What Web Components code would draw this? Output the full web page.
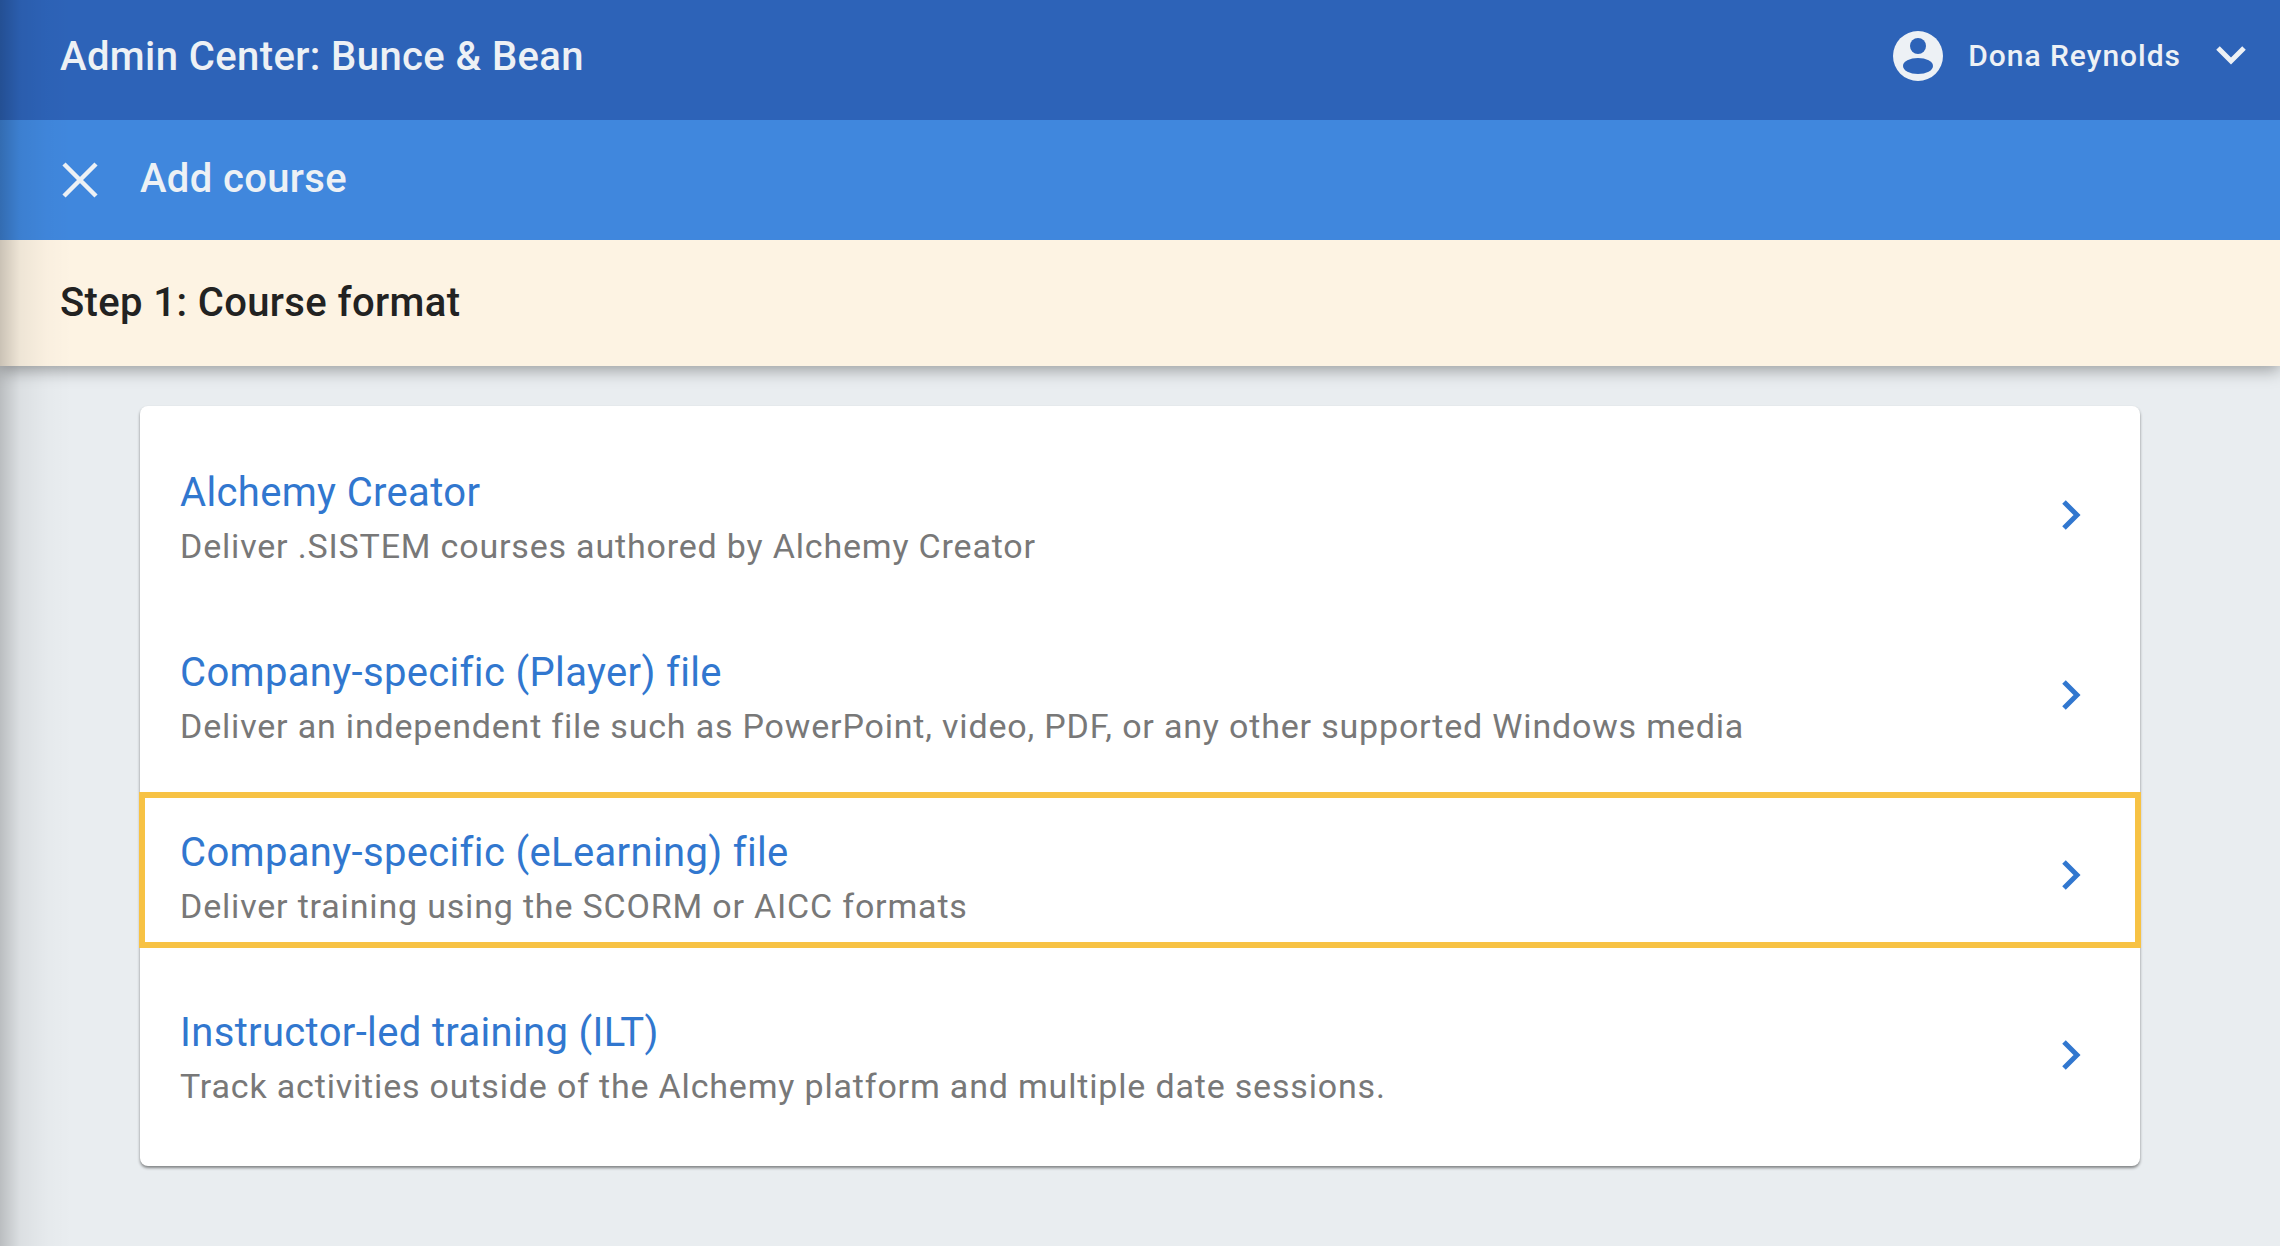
<!DOCTYPE html>
<html>
<head>
<meta charset="utf-8">
<title>Add course</title>
<style>
    html, body { margin: 0; height: 100%; }
    body { background: #e9edf0; font-family: Roboto, "Liberation Sans", sans-serif; overflow: hidden; }
</style>
</head>
<body>
<admin-page>
    <top-bar slot="top" title="Admin Center: Bunce &amp; Bean" user="Dona Reynolds"></top-bar>
    <sub-bar slot="top" title="Add course"></sub-bar>
    <step-bar slot="top">Step 1: Course format</step-bar>
    <course-list>
        <course-option heading="Alchemy Creator">Deliver .SISTEM courses authored by Alchemy Creator</course-option>
        <course-option heading="Company-specific (Player) file">Deliver an independent file such as PowerPoint, video, PDF, or any other supported Windows media</course-option>
        <course-option heading="Company-specific (eLearning) file" focused>Deliver training using the SCORM or AICC formats</course-option>
        <course-option heading="Instructor-led training (ILT)">Track activities outside of the Alchemy platform and multiple date sessions.</course-option>
    </course-list>
</admin-page>

<script>
class AdminPage extends HTMLElement {
    constructor() {
        super();
        this.attachShadow({ mode: 'open' });
        this.shadowRoot.innerHTML = `
            <style>
                :host { display: block; position: relative; height: 1246px; overflow: hidden; }
                .top { position: relative; z-index: 1; box-shadow: 0 4px 16px rgba(0,0,0,0.35); }
                .content { padding: 40px 140px 0 140px; }
                .edge {
                    position: absolute; top: 0; bottom: 0; left: 0; width: 72px; z-index: 2;
                    background: linear-gradient(to right, rgba(0,0,0,0.2), rgba(0,0,0,0.06) 28%, rgba(0,0,0,0.015) 65%, rgba(0,0,0,0));
                }
            </style>
            <div class="top"><slot name="top"></slot></div>
            <div class="content"><slot></slot></div>
            <div class="edge"></div>
        `;
    }
}

class TopBar extends HTMLElement {
    constructor() {
        super();
        this.attachShadow({ mode: 'open' });
        this.shadowRoot.innerHTML = `
            <style>
                :host { display: flex; align-items: center; height: 120px; padding: 0 33px 8px 60px; box-sizing: border-box; background: #2d63b8; color: #edf1f5; }
                h1 { flex: 1; margin: 0; font-size: 40px; font-weight: 500; letter-spacing: 0.4px; }
                .user { display: flex; align-items: center; font-size: 30px; font-weight: 500; letter-spacing: 0.98px; }
                .user span { position: relative; top: -1px; }
                .avatar { margin-right: 25px; display: block; }
                .arrow { margin-left: 34px; display: block; }
            </style>
            <h1>${this.getAttribute('title')}</h1>
            <div class="user">
                <svg class="avatar" width="50" height="50" viewBox="0 0 50 50">
                    <circle cx="25" cy="25" r="25" fill="#edf1f5"/>
                    <circle cx="25" cy="15" r="8" fill="#2d63b8"/>
                    <ellipse cx="25" cy="35" rx="15" ry="8" fill="#2d63b8"/>
                </svg>
                <span>${this.getAttribute('user')}</span>
                <svg class="arrow" width="32" height="24" viewBox="0 0 32 24">
                    <path d="M3 4 L16 17 L29 4" fill="none" stroke="#edf1f5" stroke-width="5"/>
                </svg>
            </div>
        `;
    }
}

class SubBar extends HTMLElement {
    constructor() {
        super();
        this.attachShadow({ mode: 'open' });
        this.shadowRoot.innerHTML = `
            <style>
                :host { display: flex; align-items: center; height: 120px; padding: 0 60px; box-sizing: border-box; background: #4087dd; color: #edf1f5; }
                svg { display: block; margin: 0 42px 0 2px; }
                span { font-size: 40px; font-weight: 500; letter-spacing: 0.35px; padding-bottom: 3px; }
            </style>
            <svg width="36" height="36" viewBox="0 0 36 36">
                <path d="M2 2 L34 34 M34 2 L2 34" fill="none" stroke="#edf1f5" stroke-width="4.5"/>
            </svg>
            <span>${this.getAttribute('title')}</span>
        `;
    }
}

class StepBar extends HTMLElement {
    constructor() {
        super();
        this.attachShadow({ mode: 'open' });
        this.shadowRoot.innerHTML = `
            <style>
                :host { display: flex; align-items: center; height: 126px; padding: 0 60px 1px; box-sizing: border-box; background: #fdf3e3; color: #222; font-size: 40px; font-weight: 500; letter-spacing: 0.38px; }
            </style>
            <slot></slot>
        `;
    }
}

class CourseList extends HTMLElement {
    constructor() {
        super();
        this.attachShadow({ mode: 'open' });
        this.shadowRoot.innerHTML = `
            <style>
                :host { display: flex; flex-direction: column; gap: 26px; padding: 27px 0 39px; background: #fff; border-radius: 8px; box-shadow: 0 2px 3px rgba(0,0,0,0.45); }
            </style>
            <slot></slot>
        `;
    }
}

class CourseOption extends HTMLElement {
    constructor() {
        super();
        this.attachShadow({ mode: 'open' });
        this.shadowRoot.innerHTML = `
            <style>
                :host { display: flex; align-items: center; height: 154px; padding: 0 56px 0 40px; box-sizing: border-box; }
                :host([focused]) { outline: 6px solid #f7c244; outline-offset: -5px; }
                .text { flex: 1; padding-top: 19px; }
                .title { color: #3177cf; font-size: 40px; line-height: 54px; letter-spacing: 0.34px; }
                .desc { color: #787878; font-size: 34px; line-height: 53px; letter-spacing: 0.82px; }
                svg { display: block; margin-top: 10px; }
            </style>
            <div class="text">
                <div class="title">${this.getAttribute('heading')}</div>
                <div class="desc"><slot></slot></div>
            </div>
            <svg width="24" height="36" viewBox="0 0 24 36">
                <path d="M4 5 L17 18 L4 31" fill="none" stroke="#3177cf" stroke-width="5"/>
            </svg>
        `;
    }
}

customElements.define('admin-page', AdminPage);
customElements.define('top-bar', TopBar);
customElements.define('sub-bar', SubBar);
customElements.define('step-bar', StepBar);
customElements.define('course-list', CourseList);
customElements.define('course-option', CourseOption);
</script>
</body>
</html>
